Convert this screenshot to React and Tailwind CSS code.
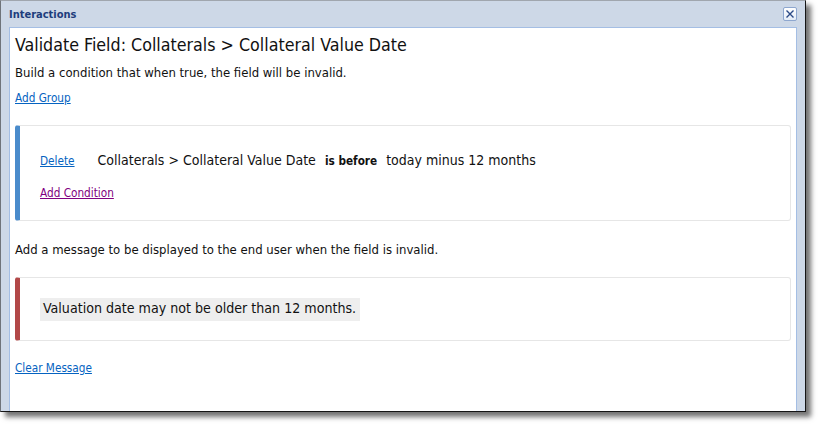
export default function App() {
  return (
    <div className="w-[821px] h-[427px] bg-white font-['DejaVu_Sans_Condensed','DejaVu_Sans',sans-serif] font-stretch-condensed">
      <div className="w-[806px] h-[412px] flex flex-col bg-[#cdd8e7] border border-t-[#a0a6ae] border-l-[#6f747a] border-r-[#151515] border-b-[#151515] shadow-[5px_5px_5px_rgba(0,0,0,0.55)]">
        {/* title bar */}
        <div className="h-[26px] flex items-center justify-between pl-[8px] pr-[8px]">
          <span className="text-[11px] font-bold text-[#1d3d7c] leading-none">Interactions</span>
          <div className="w-[14px] h-[14px] rounded-[2px] border border-[#8ea7cf] bg-gradient-to-b from-white to-[#e4ecf7] flex items-center justify-center">
            <svg width="10" height="10" viewBox="0 0 10 10">
              <path d="M1.5 1.5 L8.5 8.5 M8.5 1.5 L1.5 8.5" stroke="#2b4a86" strokeWidth="1.4" fill="none" />
            </svg>
          </div>
        </div>
        {/* content */}
        <div className="flex-1 mx-[8px] bg-white border-t border-l border-r border-[#a4bee4] px-[5px] flex flex-col text-[#111]">
          <div className="mt-[5px] h-[24px] leading-[24px] text-[17.7px] text-[#111]">
            Validate Field: Collaterals &gt; Collateral Value Date
          </div>
          <div className="mt-[8px] h-[16px] leading-[16px] text-[13px]">
            Build a condition that when true, the field will be invalid.
          </div>
          <div className="mt-[9px] h-[16px] leading-[16px] text-[11.7px]">
            <span className="text-[#0563c1] underline">Add Group</span>
          </div>
          {/* condition card */}
          <div className="mt-[19px] h-[96px] rounded-[3px] border border-[#e6e6e6] border-l-[5px] border-l-[#4a8bcb] pl-[20px] pt-[24px] flex flex-col">
            <div className="h-[20px] leading-[20px] flex items-baseline whitespace-nowrap">
              <span className="text-[11.7px] text-[#0563c1] underline">Delete</span>
              <span className="ml-[23px] text-[14px] text-[#111]">Collaterals &gt; Collateral Value Date</span>
              <span className="ml-[9px] text-[11.7px] font-bold text-[#111]">is before</span>
              <span className="ml-[9px] text-[14px] text-[#111]">today minus 12 months</span>
            </div>
            <div className="mt-[15px] h-[16px] leading-[16px] text-[11.7px]">
              <span className="text-[#800080] underline">Add Condition</span>
            </div>
          </div>
          <div className="mt-[21px] h-[16px] leading-[16px] text-[13px]">
            Add a message to be displayed to the end user when the field is invalid.
          </div>
          {/* message card */}
          <div className="mt-[19px] h-[64px] rounded-[3px] border border-[#e6e6e6] border-l-[5px] border-l-[#b24848] pl-[20px] flex items-center">
            <div className="h-[23px] w-[320px] bg-[#eeeeee] pl-[3px] flex items-center whitespace-nowrap text-[14.1px] text-[#111]">
              Valuation date may not be older than 12 months.
            </div>
          </div>
          <div className="mt-[19px] h-[16px] leading-[16px] text-[11.7px]">
            <span className="text-[#0563c1] underline">Clear Message</span>
          </div>
        </div>
      </div>
    </div>
  );
}
